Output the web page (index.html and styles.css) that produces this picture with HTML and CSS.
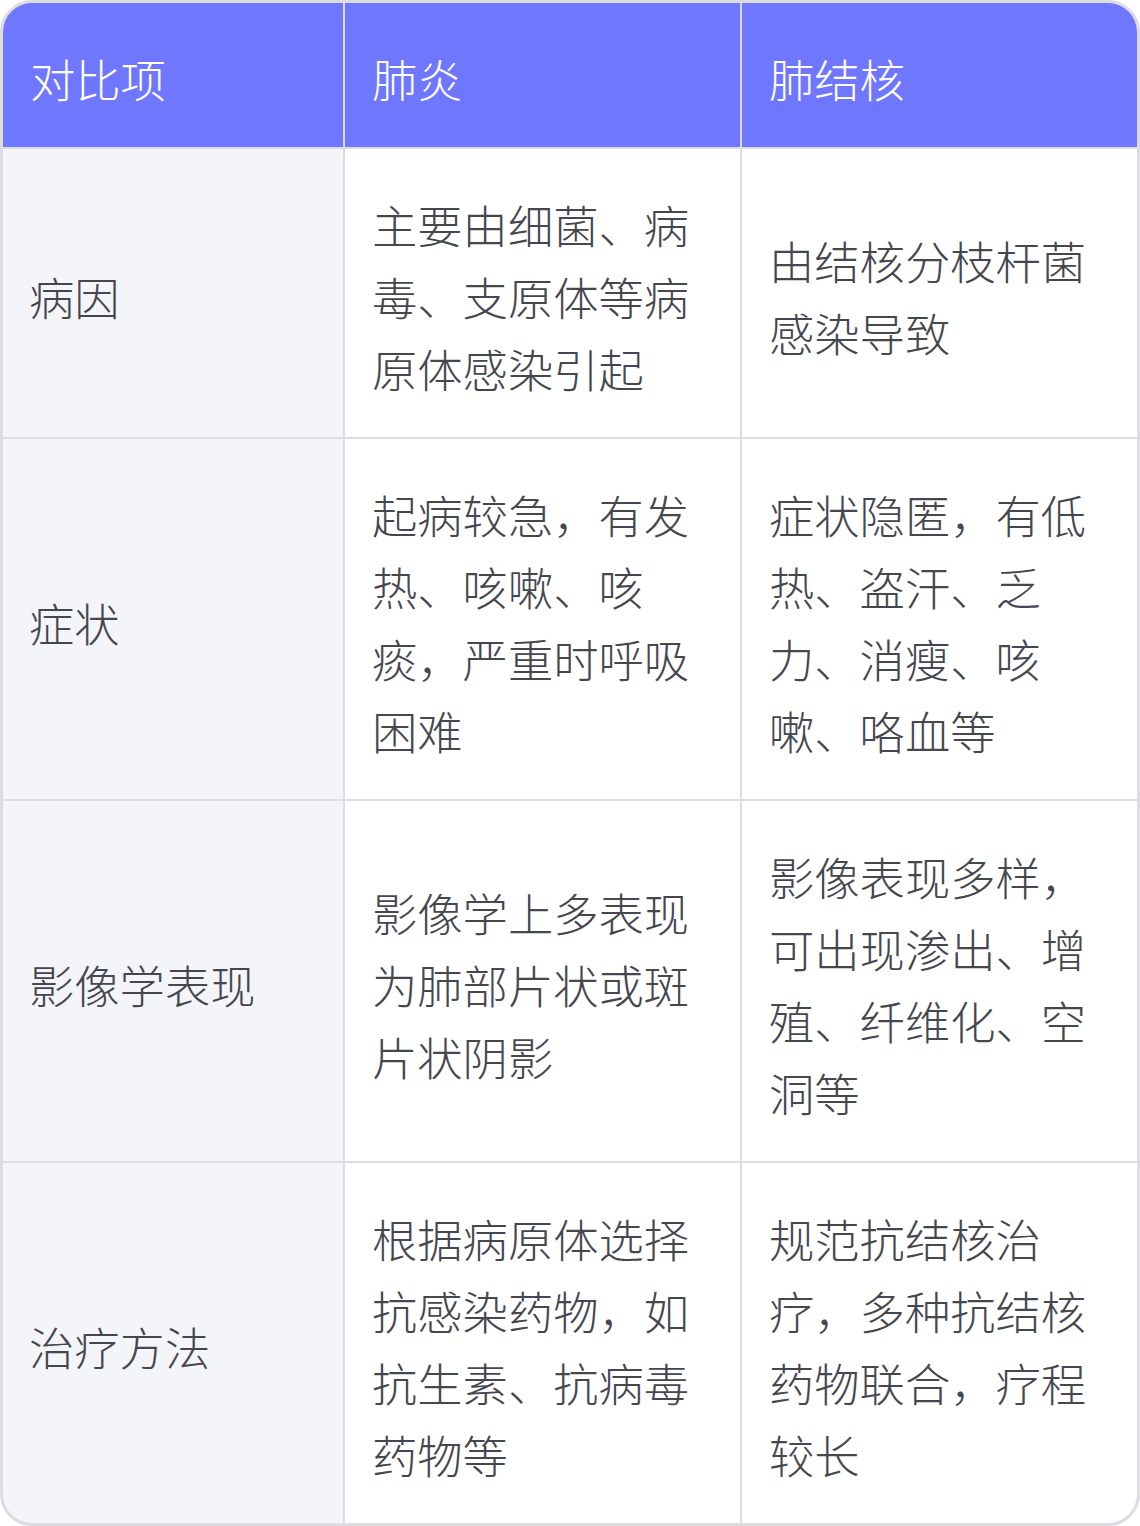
FILE: index.html
```html
<!DOCTYPE html>
<html lang="zh-CN">
<head>
<meta charset="utf-8">
<link rel="stylesheet" href="styles.css">
</head>
<body>
<div class="table">
  <div class="cell head">对比项</div>
  <div class="cell head">肺炎</div>
  <div class="cell head">肺结核</div>

  <div class="cell label">病因</div>
  <div class="cell">主要由细菌、病毒、支原体等病原体感染引起</div>
  <div class="cell">由结核分枝杆菌感染导致</div>

  <div class="cell label">症状</div>
  <div class="cell">起病较急，有发热、咳嗽、咳痰，严重时呼吸困难</div>
  <div class="cell">症状隐匿，有低热、盗汗、乏力、消瘦、咳嗽、咯血等</div>

  <div class="cell label">影像学表现</div>
  <div class="cell">影像学上多表现为肺部片状或斑片状阴影</div>
  <div class="cell">影像表现多样，可出现渗出、增殖、纤维化、空洞等</div>

  <div class="cell label">治疗方法</div>
  <div class="cell">根据病原体选择抗感染药物，如抗生素、抗病毒药物等</div>
  <div class="cell">规范抗结核治疗，多种抗结核药物联合，疗程较长</div>
</div>
</body>
</html>
```

FILE: styles.css
```css
html, body {
  margin: 0;
  padding: 0;
  background: #ffffff;
}
.table {
  width: 1134px;
  border: 3px solid #dcdde3;
  border-radius: 32px;
  overflow: hidden;
  display: grid;
  grid-template-columns: 340px 395px 395px;
  grid-template-rows: 144px 288px 360px 360px 360px;
  gap: 2px;
  background: #dcdde3;
  font-family: "Noto Sans CJK SC", "Noto Sans", sans-serif;
  font-weight: 300;
  font-size: 45.3px;
  line-height: 72px;
  color: #45474f;
}
.cell {
  background: #ffffff;
  padding: 6px 26px 0 27px;
  display: flex;
  align-items: center;
  word-break: break-all;
}
.cell.head {
  background: #7077ff;
  color: #ffffff;
}
.cell.label {
  background: #f4f5f9;
  padding-left: 26px;
}
```
